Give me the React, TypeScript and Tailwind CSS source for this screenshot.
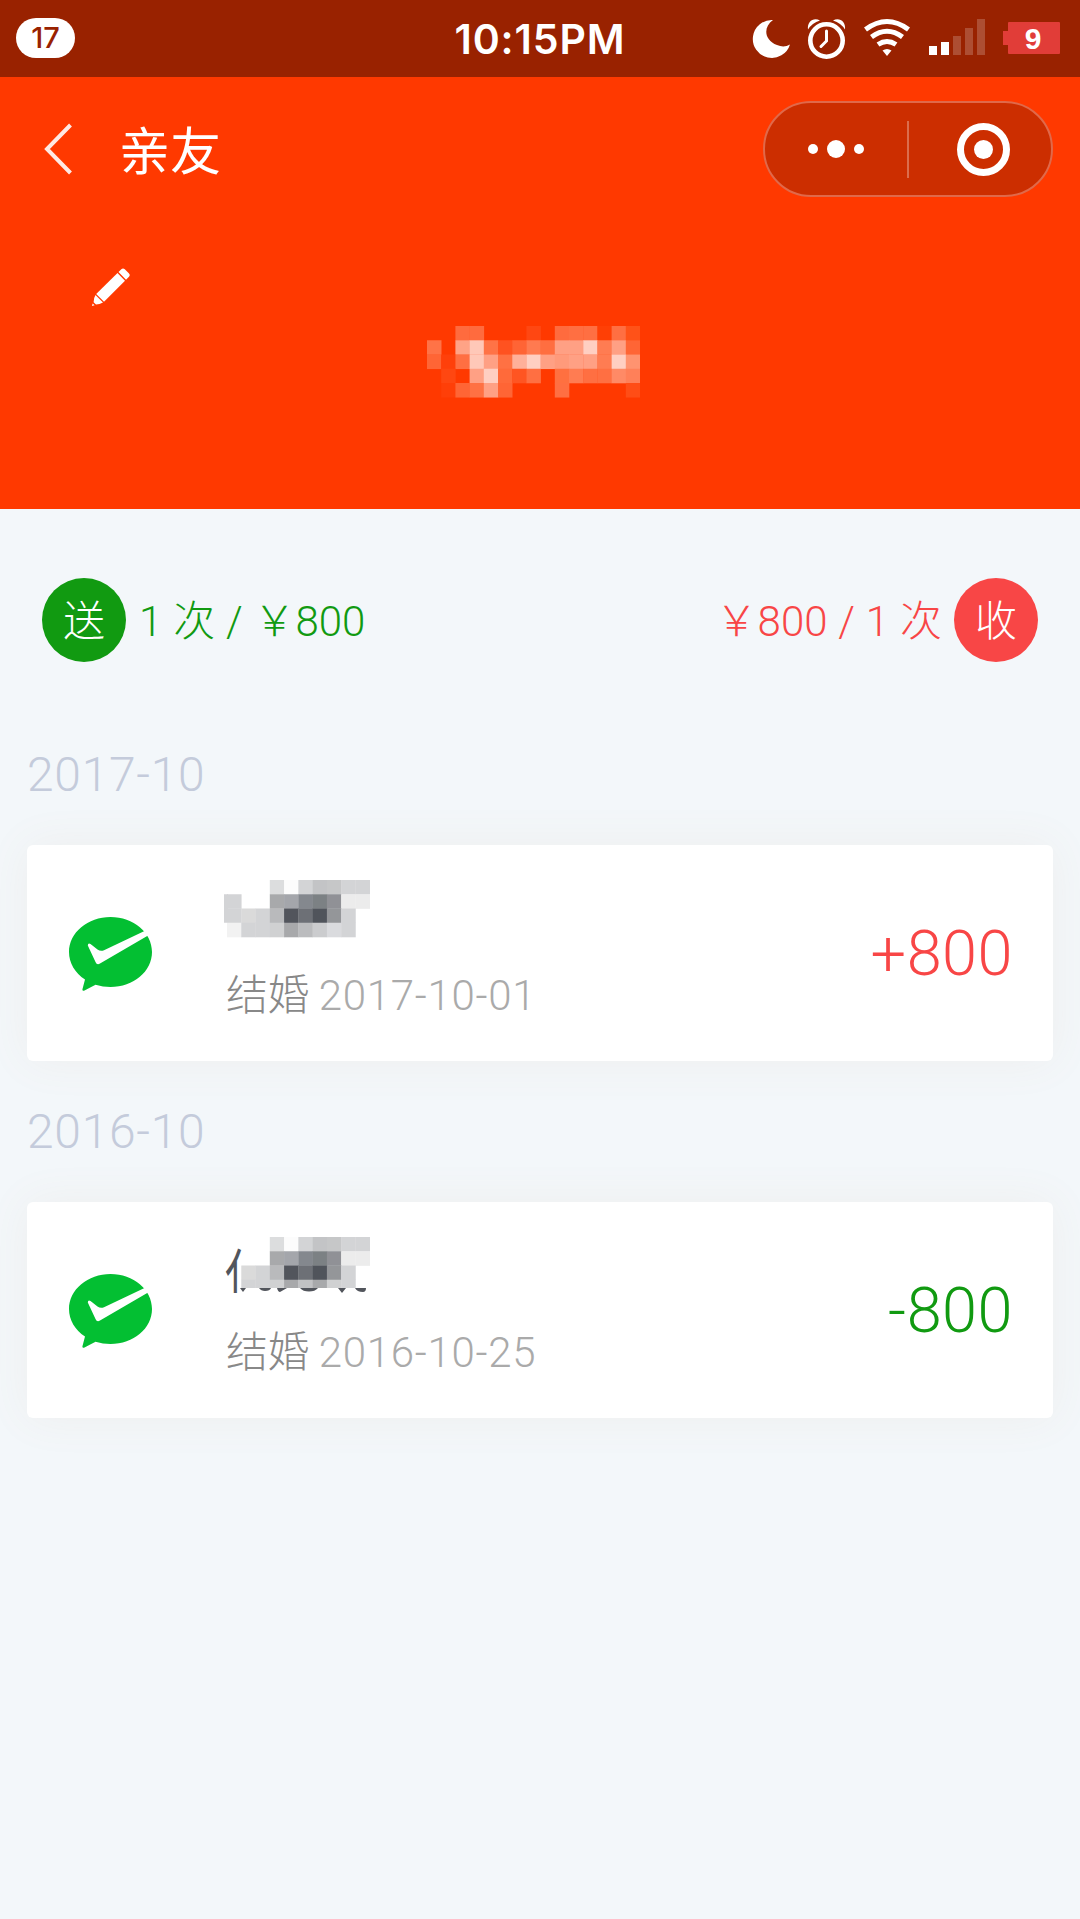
type MonthRecord = {
  month: string;
  event: string;
  date: string;
  amount: number;
  clipped: boolean;
};

const records: MonthRecord[] = [
  { month: "2017-10", event: "结婚", date: "2017-10-01", amount: 800, clipped: false },
  { month: "2016-10", event: "结婚", date: "2016-10-25", amount: -800, clipped: true },
];

// One string per row, "-" leaves the cell empty
const headerCells = [
  "- - ff6b3e ff6b3e - - - ff4712 - ff6b3e ff6f42 ff6f42 ff3f05 ff6f42 ff5218",
  "ff7347 - ffa386 ffc8b8 ff7346 ff5220 ff6435 ff7a50 ff6e40 ffa084 ffa084 ffcfc2 ff7c52 ffa084 ff6535",
  "ff6535 ff400a ff6f42 ffc8b8 ffa084 ff7143 ffb09a ffcfc2 ffa084 ff9a7b ffa084 ffa084 ff7c52 ffcfc2 ff9370",
  "- ff4711 - ffa084 ffcfc2 ff6a3a ff5522 ff6f42 - ff7040 ff7c52 ff6f42 ff6f42 ff8a66 ff8059",
  "- ff3f08 ff6535 ff7143 ffa084 ff6535 - - - ff6f42 - - - - ff4d16",
];

const cardCells = [
  "- - - dcddde fcfcfc d3d4d6 c3c4c6 c6c7c8 d3d4d6 d3d4d6",
  "d3d4d6 - - a8a9ab a4a6ab 84888e 7c8184 909196 ececec ececec",
  "d3d4d6 dadada d3d4d6 b9babc 52555c 6d7076 50545b 949699 d3d4d6 -",
  "f2f2f2 d3d4d6 d3d4d6 d0d1d2 a8a9ab bbbcbe cbccce dadbde d3d4d6 -",
];

const clippedCells = [
  "- - - dcddde fcfcfc d3d4d6 c3c4c6 c6c7c8 d3d4d6 d3d4d6",
  "- - - a8a9ab a4a6ab 84888e 7c8184 909196 ececec ececec",
  "- dadada d3d4d6 b9babc 52555c 6d7076 50545b 949699 d3d4d6 -",
  "- d3d4d6 d3d4d6 d0d1d2 a8a9ab c1c2c4 a8a9ab d0d1d2 d3d4d6 -",
];

function Cells({ rows, w, h }: { rows: string[]; w: number; h: number }) {
  return (
    <>
      {rows.map((row, r) =>
        row.split(" ").map((color, c) =>
          color === "-" ? null : (
            <rect
              key={`${r}-${c}`}
              x={c * w}
              y={r * h}
              width={w + 0.3}
              height={h + 0.3}
              fill={`#${color}`}
            />
          )
        )
      )}
    </>
  );
}

function StatusBar() {
  return (
    <div className="h-[77px] bg-[#992200] grid grid-cols-[1fr_auto_1fr] items-center pl-4 pr-5">
      <div className="w-[59px] h-10 mb-[2px] rounded-full bg-white text-[#992200] text-[29px] font-medium leading-[39px] text-center font-['Inter',sans-serif]">
        17
      </div>

      <div className="pt-[2px] pl-1 text-white text-[41px] leading-none font-semibold tracking-[0.9px] font-['Inter',sans-serif]">
        10:15PM
      </div>

      <svg className="justify-self-end" width="308" height="77" viewBox="752 0 308 77" fill="none">
        <path
          d="M773 20A19 19 0 1 0 790 44.5Q784 48 777 45C764 40 763 27 773 20Z"
          fill="#fff"
        />

        <circle cx="826.5" cy="40.5" r="16.2" stroke="#fff" strokeWidth="4.6" />
        <path d="M826.5 31v10l-5.5 5.5" stroke="#fff" strokeWidth="3" strokeLinecap="round" />
        <path d="M808 29.5C807 21 814 17 820 20.5Q812 23 808 29.5Z" fill="#fff" />
        <path d="M845 29.5C846 21 839 17 833 20.5Q841 23 845 29.5Z" fill="#fff" />

        <g stroke="#fff" strokeWidth="5">
          <path d="M865.5 29.5Q887 13.5 908.5 29.5" />
          <path d="M871.5 37Q887 25.5 902.5 37" />
          <path d="M878 44.5Q887 38.5 896 44.5" />
        </g>
        <path d="M882.5 50.5Q887 47.5 891.5 50.5L887 56Z" fill="#fff" />

        <path d="M929 46h8v9h-8zM941 42h8v13h-8z" fill="#fff" />
        <path d="M953 36h8v19h-8zM965 28h8v27h-8zM977 19h8v36h-8z" fill="#ad4e33" />

        <path d="M1003 31h5v-8q0-1 1-1h50q1 0 1 1v30q0 1-1 1h-50q-1 0-1-1v-8h-5z" fill="#e13d38" />
        <text
          x="1033"
          y="48.5"
          textAnchor="middle"
          fill="#fff"
          className="text-[30px] font-bold font-['Liberation_Sans',sans-serif]"
        >
          9
        </text>
      </svg>
    </div>
  );
}

function Header() {
  return (
    <header className="h-[432px] bg-[#ff3900] text-white">
      <div className="flex items-center pt-6 pl-[43px] pr-[27px]">
        <svg width="30" height="54" viewBox="0 0 30 54" fill="none">
          <path d="M27.5 3L4 27L27.5 51" stroke="#ffe9e3" strokeWidth="4" />
        </svg>
        <h1 className="ml-[46px] pb-[2px] text-[51px] leading-[50px] font-normal font-['Noto_Sans_CJK_SC',sans-serif]">
          亲友
        </h1>

        <div className="ml-auto w-[290px] h-24 flex items-center rounded-full border-2 border-[#e0694a] bg-[#cc2e00]">
          <div className="w-[142px] flex items-center justify-center gap-[9px]">
            <span className="size-[10px] rounded-full bg-white" />
            <span className="size-[18px] rounded-full bg-white" />
            <span className="size-[10px] rounded-full bg-white" />
          </div>
          <span className="w-[2px] h-[57px] bg-[#db6d4d]" />
          <div className="flex-1 flex justify-center pl-[6px]">
            <span className="size-[53px] rounded-full border-[7px] border-white flex items-center justify-center">
              <span className="size-[19px] rounded-full bg-white" />
            </span>
          </div>
        </div>
      </div>

      <svg className="ml-[92px] mt-[71px]" width="38" height="38" viewBox="0 0 38 38" fill="#fff">
        <path d="M26.5 4L29.3 1.2Q31 -.4 32.8 1.2L36.8 5.2Q38.6 7 37 8.8L34 11.800Z" />
        <path d="M25.5 5L33 12.800L12 33.700L4.2 26Z" />
        <path d="M3.5 27L11 34.5Q7.5 36.6 4 36.6L1.6 34.2Q1.6 30 3.5 27Z" />
        <path d="M0 38L.6 35.6L2.6 37.3Z" />
      </svg>

      <svg className="mx-auto mt-5 relative left-[-7px]" width="213" height="72" viewBox="0 0 213 72">
        <Cells rows={headerCells} w={14.2} h={14.25} />
      </svg>
    </header>
  );
}

function Summary() {
  return (
    <div className="h-[84px] mt-[69px] px-[42px] flex items-center justify-between text-[42px] leading-none font-light font-['Roboto','Noto_Sans_CJK_SC',sans-serif]">
      <div className="flex items-center text-[#119a11]">
        <span className="size-[84px] rounded-full bg-[#119a11] text-white leading-[87px] text-center">
          送
        </span>
        <span className="ml-[13px] pt-[3px] whitespace-nowrap [word-spacing:0.6px]">1 次 / ￥800</span>
      </div>
      <div className="flex items-center text-[#f84646]">
        <span className="mr-[12px] pt-[3px] whitespace-nowrap [word-spacing:0.6px]">￥800 / 1 次</span>
        <span className="size-[84px] rounded-full bg-[#f84646] text-white leading-[87px] text-center">
          收
        </span>
      </div>
    </div>
  );
}

function WechatPayIcon() {
  return (
    <svg className="mt-[2px]" width="83" height="74" viewBox="0 0 83 74">
      <path
        d="M41.5 0C19 0 0 15.5 0 35C0 46 6 56 16 62.5L13.5 72Q13 74.5 15.5 73.5L26.5 67.7Q34 70 41.5 70C64.5 70 83 54.5 83 35C83 15.5 64.5 0 41.5 0Z"
        fill="#03bf32"
      />
      <path
        d="M75.5 14L35 33.2Q31.5 34.5 28.5 32.5L21.5 27Q19 25.5 18.8 28.5L26.5 45Q28 48.5 31 46.5L79.5 18.3Z"
        fill="#fff"
      />
    </svg>
  );
}

function MaskedName({ clipped }: { clipped: boolean }) {
  return (
    <svg className="overflow-visible" width="150" height="62" viewBox="-3 0 150 62">
      {clipped ? (
        <>
          <text
            transform="translate(-2 52) scale(0.68 1)"
            fill="#52555c"
            className="text-[48px] font-medium font-['Noto_Sans_CJK_SC',sans-serif]"
          >
            亻
          </text>
          <Cells rows={clippedCells} w={14.27} h={14.25} />
          <path d="M14 51h130v10h-130z" fill="#fff" />
          <path
            d="M13 51h6l-3 4zM32 51h12q-1 3-6 3q-4 0-6-3zM50 51h10l-7 4q-2 0-3-4zM73 51h18q-3 3.5-9 3.5t-9-3.5zM111 51h8l-4 5zM128 51h11q0 4-3 4q-6 0-8-4z"
            fill="#52555c"
          />
        </>
      ) : (
        <>
          <rect x="-3" y="14.25" width="4" height="28.5" fill="#d3d4d6" />
          <Cells rows={cardCells} w={14.27} h={14.25} />
        </>
      )}
    </svg>
  );
}

function RecordCard({ record }: { record: MonthRecord }) {
  const received = record.amount > 0;

  return (
    <section className="font-['Roboto','Noto_Sans_CJK_SC',sans-serif] font-light">
      <h2 className="h-[141px] pt-[33px] text-[48px] leading-[76px] tracking-[0.7px] text-[#c4cbdb]">
        {record.month}
      </h2>
      <div className="h-[216px] rounded-md bg-white shadow-[0_0_45px_#eeeeee] flex items-center pl-[42px] pr-[40px]">
        <WechatPayIcon />
        <div className="ml-[72px] self-start pt-[35px]">
          <MaskedName clipped={record.clipped} />
          <p className="mt-[29px] ml-[2px] text-[42px] leading-[50px] tracking-[0.7px] text-[#aaaaaa] whitespace-nowrap">
            <span className="text-[#888888] tracking-[-0.5px]">{record.event} </span>
            {record.date}
          </p>
        </div>
        <div
          className={
            received
              ? "ml-auto text-[63px] leading-none tracking-[0.5px] text-[#f84646]"
              : "ml-auto text-[63px] leading-none tracking-[0.5px] text-[#119a11]"
          }
        >
          {received ? `+${record.amount}` : record.amount}
        </div>
      </div>
    </section>
  );
}

export default function App() {
  return (
    <div className="w-[1080px] h-[1919px] overflow-hidden bg-[#f3f7fa]">
      <StatusBar />
      <Header />
      <Summary />
      <main className="px-[27px] pt-[42px]">
        {records.map((record) => (
          <RecordCard key={record.month} record={record} />
        ))}
      </main>
    </div>
  );
}
